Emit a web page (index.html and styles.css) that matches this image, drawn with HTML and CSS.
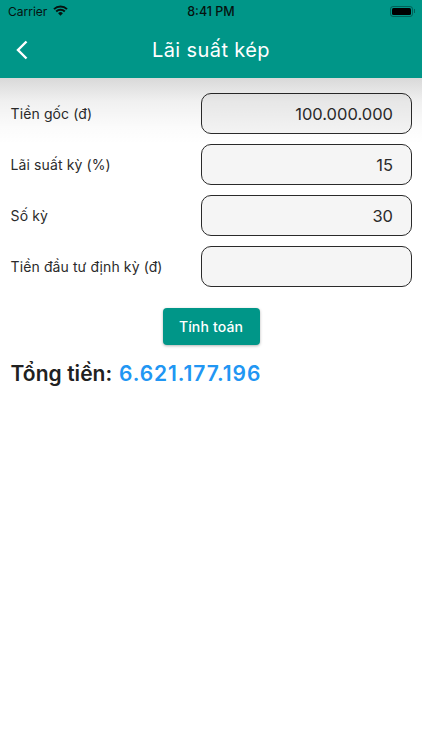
FILE: index.html
```html
<!DOCTYPE html>
<html lang="en">
<head>
    <meta charset="UTF-8">
    <title>Lãi suất kép</title>
    <meta name="viewport" content="width=device-width, initial-scale=1.0">
    <link rel="stylesheet" href="styles.css">
</head>
<body>
    <header class="app-header">
        <div class="status-bar">
            <div class="status-left">
                <span>Carrier</span>
                <svg class="wifi" viewBox="0 0 16 12" width="15" height="11">
                    <path d="M8 11.8 5.4 8.9a3.6 3.6 0 0 1 5.2 0z" fill="#06120f"/>
                    <path d="M.9 4.5a10.2 10.2 0 0 1 14.2 0" fill="none" stroke="#06120f" stroke-width="2.2"/>
                    <path d="M3.3 7.1a6.8 6.8 0 0 1 9.4 0" fill="none" stroke="#06120f" stroke-width="2.2"/>
                </svg>
            </div>
            <span class="status-time">8:41 PM</span>
            <div class="battery">
                <div class="battery-body"><div class="battery-level"></div></div>
                <div class="battery-cap"></div>
            </div>
        </div>
        <div class="nav-bar">
            <svg class="back" viewBox="0 0 14 22" width="14" height="22">
                <path d="M11.5 2.5 3 11l8.5 8.5" fill="none" stroke="#fff" stroke-width="2.4"/>
            </svg>
            <h1>Lãi suất kép</h1>
        </div>
    </header>
    <div class="header-shadow"></div>
    <main class="content">
        <form class="calc-form">
            <div class="row">
                <label>Tiền gốc (đ)</label>
                <div class="field">100.000.000</div>
            </div>
            <div class="row">
                <label>Lãi suất kỳ (%)</label>
                <div class="field">15</div>
            </div>
            <div class="row">
                <label>Số kỳ</label>
                <div class="field">30</div>
            </div>
            <div class="row">
                <label>Tiền đầu tư định kỳ (đ)</label>
                <div class="field"></div>
            </div>
        </form>
        <div class="actions">
            <button type="button">Tính toán</button>
        </div>
        <p class="total">Tổng tiền: <span>6.621.177.196</span></p>
    </main>
</body>
</html>
```

FILE: styles.css
```css
html { box-sizing: border-box; }
*, *::before, *::after { box-sizing: inherit; }
body {
    margin: 0;
    height: 750px;
    background: #fff;
    color: #212121;
    font-family: 'Inter', 'Noto Sans', sans-serif;
    overflow: hidden;
    position: relative;
}
.app-header {
    height: 78px;
    background: #009688;
    position: relative;
    z-index: 1;
}
.status-bar {
    height: 22px;
    padding: 0 7px 0 8px;
    display: flex;
    align-items: center;
    justify-content: space-between;
    font-family: 'Inter', sans-serif;
    font-size: 12px;
    color: #06120f;
}
.status-left {
    width: 119px;
    display: flex;
    align-items: center;
    gap: 6px;
}
.wifi { margin-top: -2px; }
.status-time {
    font-weight: 500;
    font-size: 12.5px;
}
.battery {
    width: 120px;
    display: flex;
    justify-content: flex-end;
    align-items: center;
}
.battery-body {
    width: 23px;
    height: 11px;
    border: 1px solid rgba(0,0,0,0.35);
    border-radius: 3px;
    padding: 1px;
}
.battery-level {
    height: 100%;
    background: #000;
    border-radius: 1.5px;
}
.battery-cap {
    width: 1px;
    height: 4px;
    margin-left: 1px;
    background: rgba(0,0,0,0.35);
}
.nav-bar {
    height: 56px;
    display: flex;
    align-items: center;
    justify-content: center;
    position: relative;
}
.back {
    position: absolute;
    left: 15px;
    top: 17px;
}
h1 {
    margin: 0;
    font-size: 20px;
    font-weight: 400;
    letter-spacing: 0.4px;
    color: #fff;
}
/* shadow falls over the first row too */
.header-shadow {
    position: absolute;
    top: 78px;
    left: 0;
    right: 0;
    height: 66px;
    z-index: 1;
    pointer-events: none;
    background: linear-gradient(to bottom, rgba(0,0,0,0.15), rgba(0,0,0,0.06) 35%, rgba(0,0,0,0.015) 75%, rgba(0,0,0,0));
}
.content {
    position: relative;
    padding: 15px 10px 0;
}
.calc-form {
    display: flex;
    flex-direction: column;
    gap: 10px;
}
.row {
    display: flex;
    align-items: center;
    justify-content: space-between;
}
label {
    font-size: 14px;
    letter-spacing: 0.1px;
    color: #2b2b2b;
    margin: -1px 0 0 0.6px;
}
.field {
    width: 211px;
    height: 41px;
    border: 1.4px solid #2a2a2a;
    border-radius: 10px;
    background: #f5f5f5;
    padding: 0 18px;
    display: flex;
    align-items: center;
    justify-content: flex-end;
    font-size: 16.5px;
    color: #2b2b2b;
}
.actions {
    display: flex;
    justify-content: center;
    margin-top: 21px;
}
button {
    width: 97px;
    height: 37px;
    padding: 0;
    border: none;
    border-radius: 4px;
    background: #009688;
    color: #fff;
    font-family: inherit;
    font-size: 14px;
    font-weight: 500;
    letter-spacing: 0.15px;
    box-shadow: 0 1px 3px rgba(0,0,0,0.3);
}
.total {
    margin: 16px 0 0 0.6px;
    font-size: 21px;
    font-weight: 600;
    letter-spacing: 0.05px;
    color: #212121;
}
.total span {
    color: #2196f3;
    letter-spacing: 0.9px;
    margin-left: 1.4px;
}
```
